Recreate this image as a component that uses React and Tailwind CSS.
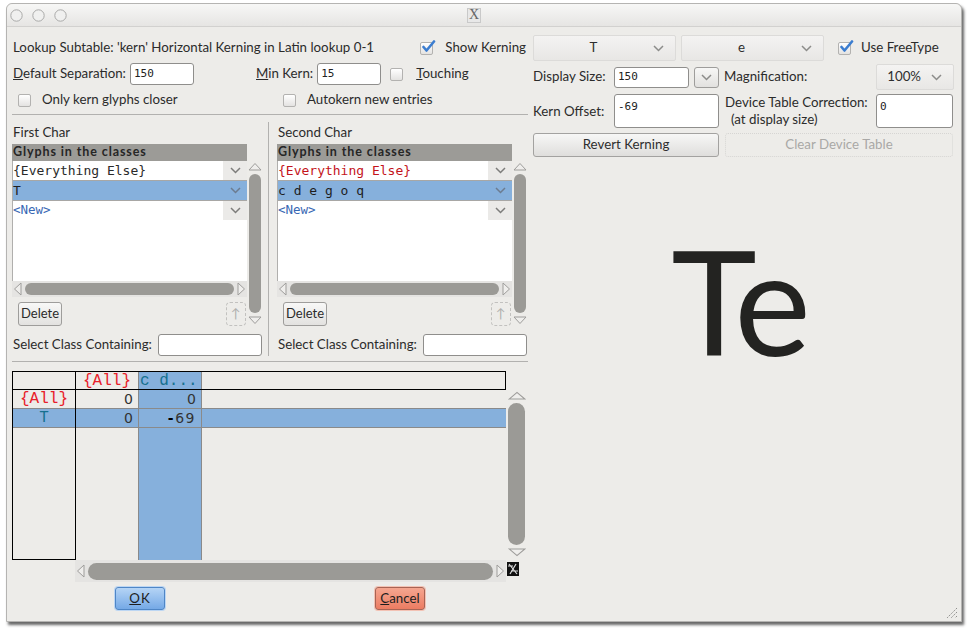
import React from "react";

const UI = "font-['Lato','Open_Sans',sans-serif]";
const MONO = "font-['DejaVu_Sans_Mono',monospace]";
const CMONO = "font-['Liberation_Mono',monospace]";

function Chevron({ color = "#8c8c8a" }) {
  return (
    <svg width="11" height="7" viewBox="0 0 11 7">
      <path d="M1 1 L5.5 5.5 L10 1" fill="none" stroke={color} strokeWidth="1.5" />
    </svg>
  );
}

function Check({ checked }) {
  return (
    <span className="relative inline-block w-[13px] h-[13px] rounded-[2px] border border-[#b3b2b0] bg-gradient-to-b from-white to-[#e4e3e1] shrink-0">
      {checked && (
        <svg className="absolute -top-[3px] left-[0px]" width="15" height="14" viewBox="0 0 15 14">
          <path d="M2.5 7 L5.5 10.5 L13 1.5" fill="none" stroke="#3b7dd0" strokeWidth="2.6" strokeLinecap="round" strokeLinejoin="round" />
        </svg>
      )}
    </span>
  );
}

function Input({ w, h = 22, value = "", top = false }) {
  return (
    <div
      className={`bg-white border border-[#8f8e8c] rounded-[3px] px-[3px] text-[11px] text-[#222] ${MONO} flex ${top ? "items-start pt-[4px]" : "items-center"} shrink-0`}
      style={{ width: w, height: h }}
    >
      {value}
    </div>
  );
}

function Dropdown({ w, label, align = "center" }) {
  return (
    <div
      className="h-full flex items-center rounded-[2px] border border-[#dcdbd9] bg-gradient-to-b from-[#f4f3f2] to-[#e8e7e5] shrink-0"
      style={{ width: w }}
    >
      <div className={`flex-1 text-[13.3px] text-[#2e2e2e] ${align === "center" ? "text-center" : "text-right pr-[10px]"}`}>{label}</div>
      <div className="pr-[11px]">
        <Chevron />
      </div>
    </div>
  );
}

function Button({ w, children, className = "" }) {
  return (
    <div
      className={`h-full flex items-center justify-center rounded-[3px] border border-[#a3a2a0] bg-gradient-to-b from-[#f7f7f6] to-[#dfdedc] text-[13.3px] text-[#2e2e2e] shrink-0 ${className}`}
      style={{ width: w }}
    >
      {children}
    </div>
  );
}

function TriUp({ w = 14 }) {
  return (
    <svg width={w} height="9" viewBox="0 0 14 9" preserveAspectRatio="none">
      <path d="M1 8 L7 1.5 L13 8 Z" fill="#efeeec" stroke="#9e9d9b" strokeWidth="1" />
    </svg>
  );
}
function TriDown({ w = 14 }) {
  return (
    <svg width={w} height="9" viewBox="0 0 14 9" preserveAspectRatio="none">
      <path d="M1 1 L7 7.5 L13 1 Z" fill="#efeeec" stroke="#9e9d9b" strokeWidth="1" />
    </svg>
  );
}
function TriLeft() {
  return (
    <svg width="9" height="14" viewBox="0 0 9 14">
      <path d="M8 1 L1.5 7 L8 13 Z" fill="#efeeec" stroke="#9e9d9b" strokeWidth="1" />
    </svg>
  );
}
function TriRight() {
  return (
    <svg width="9" height="14" viewBox="0 0 9 14">
      <path d="M1 1 L7.5 7 L1 13 Z" fill="#efeeec" stroke="#9e9d9b" strokeWidth="1" />
    </svg>
  );
}

function VScroll({ thumb = 12, triW = 14 }) {
  return (
    <div className="h-full flex flex-col items-center py-[1px]">
      <TriUp w={triW} />
      <div className="flex-1 my-[3px] rounded-full bg-[#9b9a96]" style={{ width: thumb }} />
      <TriDown w={triW} />
    </div>
  );
}

function HScroll({ thumb = 12 }) {
  return (
    <div className="h-full flex items-center px-[1px] bg-[#e5e4e2]">
      <TriLeft />
      <div className="flex-1 mx-[3px] rounded-full bg-[#9b9a96]" style={{ height: thumb }} />
      <TriRight />
    </div>
  );
}

function ClassPanel({ title, redElse, selected }) {
  return (
    <div className="w-[250px] flex flex-col shrink-0">
      <div className="h-[20px] flex items-center pl-[1px] pt-[1px] text-[13.3px]">{title}</div>
      <div className="mt-[2px] flex">
        <div className="w-[235px] flex flex-col">
          <div className="h-[17px] bg-[#9c9b97] font-bold text-[#262626] text-[12.5px] tracking-[0.9px] flex items-center pl-[1px]">
            Glyphs in the classes
          </div>
          <div className={`h-[120px] bg-white border-l border-[#b0afad] flex flex-col ${MONO} text-[13px]`}>
            <div className="h-[20px] flex items-stretch border-b border-[#a8a7a5]">
              <div className={`flex-1 flex items-center ${redElse ? "text-[#c4141b]" : "text-[#2a2a2a]"}`}>{"{Everything Else}"}</div>
              <div className="w-[24px] bg-[#ebeae8] flex items-center justify-center">
                <Chevron color="#7d7d7b" />
              </div>
            </div>
            <div className="h-[20px] flex items-stretch bg-[#86b0dc] border-b border-[#a8a7a5]">
              <div className="flex-1 flex items-center text-[#1e1e1e] whitespace-pre">{selected}</div>
              <div className="w-[24px] flex items-center justify-center">
                <Chevron color="#6c7c90" />
              </div>
            </div>
            <div className="h-[19px] flex items-stretch">
              <div className="flex-1 flex items-center text-[#3868b4] text-[12.5px]">{"<New>"}</div>
              <div className="w-[24px] bg-[#ebeae8] flex items-center justify-center">
                <Chevron color="#7d7d7b" />
              </div>
            </div>
          </div>
          <div className="h-[16px]">
            <HScroll thumb={12} />
          </div>
          <div className="mt-[5px] h-[24px] flex justify-between">
            <div className="ml-[6px] w-[44px] h-[24px] rounded-[3px] border border-[#9e9d9b] bg-gradient-to-b from-[#f8f8f7] to-[#e3e2e0] flex items-center justify-center text-[13px]">
              Delete
            </div>
            <div className="mr-[1px] w-[20px] h-[24px] rounded-[4px] border border-dashed border-[#c2c1bf] flex items-center justify-center text-[#b0afad] text-[13px]">
              ↑
            </div>
          </div>
        </div>
        <div className="w-[15px] mt-[17px] h-[165px]">
          <VScroll thumb={12} />
        </div>
      </div>
      <div className="mt-[8px] h-[22px] flex items-center justify-between pl-[1px] text-[13.3px]">
        <span>Select Class Containing:</span>
        <Input w={104} h={22} />
      </div>
    </div>
  );
}

const blue = "bg-[#86b0dc]";

function KernTable() {
  return (
    <div className="mt-[9px] flex flex-col">
      <div className="flex">
        <div className="w-[494px] flex flex-col">
          <div className={`h-[19px] flex border border-black ${CMONO} text-[16px]`}>
            <div className="w-[63px] border-r border-black" />
            <div className="w-[63px] flex items-center justify-center text-[#e8202a] border-r border-[#888]">{"{All}"}</div>
            <div className={`w-[63px] ${blue} flex items-center pl-[1px] text-[#17708f] border-r border-[#888]`}>c d...</div>
            <div className="flex-1" />
          </div>
          <div className="h-[170px] flex text-[16px]">
            <div className={`w-[64px] border-l border-r border-b border-black flex flex-col ${CMONO}`}>
              <div className="h-[18px] flex items-center justify-center text-[#e8202a]">{"{All}"}</div>
              <div className={`h-[20px] ${blue} border-y border-[#8a8a8a] flex items-center justify-center text-[#17708f]`}>T</div>
            </div>
            <div className={`w-[63px] border-r border-[#8a8a8a] flex flex-col font-['DejaVu_Sans',sans-serif] text-[14px] text-[#333]`}>
              <div className="h-[18px] flex items-center justify-end pr-[5px]">0</div>
              <div className={`h-[20px] ${blue} border-y border-[#8a8a8a] flex items-center justify-end pr-[5px]`}>0</div>
            </div>
            <div className={`w-[63px] ${blue} border-r border-[#8a8a8a] flex flex-col font-['DejaVu_Sans',sans-serif] text-[14px] text-[#333]`}>
              <div className="h-[18px] flex items-center justify-end pr-[5px]">0</div>
              <div className="h-[20px] border-y border-[#8a8a8a] flex items-center justify-end pr-[5px] tracking-[1.5px]">
                <span className="font-bold text-black">-</span>69
              </div>
            </div>
            <div className="flex-1 flex flex-col">
              <div className="h-[18px]" />
              <div className={`h-[20px] ${blue} border-y border-[#8a8a8a]`} />
            </div>
          </div>
        </div>
        <div className="w-[19px] mt-[19px] h-[168px] ml-[1px]">
          <VScroll thumb={17} triW={18} />
        </div>
      </div>
      <div className="flex h-[22px]">
        <div className="ml-[63px] w-[431px] h-[22px]">
          <HScroll thumb={17} />
        </div>
        <div className="ml-[1px] mt-[2px]">
          <svg width="12" height="14" viewBox="0 0 12 14">
            <rect x="0" y="0" width="12" height="14" fill="#111" />
            <path d="M2 2 L10 12 M9 2 L3 12 M1 4 L6 4 M4 9 L11 9" stroke="#ddd" strokeWidth="1.2" />
          </svg>
        </div>
      </div>
    </div>
  );
}

export default function App() {
  return (
    <div className={`w-[968px] h-[632px] bg-white overflow-hidden ${UI} text-[#2b2b2b]`}>
      <div className="ml-[6px] mt-[3px] w-[956px] h-[619px] border border-[#b5b4b2] rounded-t-[6px] shadow-[2px_3px_3px_rgba(0,0,0,0.6)] bg-[#edece9] flex flex-col relative">
        {/* title bar */}
        <div className="h-[23px] rounded-t-[6px] bg-gradient-to-b from-[#f7f7f6] to-[#e6e5e3] border-b border-[#d2d1cf] flex items-center shrink-0">
          <div className="pl-[3px] flex gap-[9px]">
            {[0, 1, 2].map((i) => (
              <svg key={i} width="13" height="13" viewBox="0 0 13 13">
                <circle cx="6.5" cy="6.5" r="5.7" fill="#f0f0ef" stroke="#a9a9a8" strokeWidth="1" />
              </svg>
            ))}
          </div>
          <div className="flex-1 flex justify-center pr-[10px]">
            <div className="w-[14px] h-[15px] bg-[#e8e8e8] border border-[#c9c9c9] flex items-center justify-center font-['Liberation_Serif',serif] text-[14px] text-[#666] leading-none">
              X
            </div>
          </div>
          <div className="w-[70px]" />
        </div>

        {/* body */}
        <div className="flex flex-1 pl-[5px]">
          {/* left column */}
          <div className="w-[516px] flex flex-col pt-[11px] text-[13.3px] shrink-0">
            <div className="h-[20px] flex items-center">
              <span className="pl-[1px]">Lookup Subtable: 'kern' Horizontal Kerning in Latin lookup 0-1</span>
              <div className="flex-1" />
              <Check checked />
              <span className="ml-[12px] mr-[2px]">Show Kerning</span>
            </div>
            <div className="mt-[5px] h-[22px] flex items-center">
              <div className="w-[244px] flex items-center shrink-0">
                <span className="pl-[1px]">
                  <span className="underline">D</span>efault Separation:
                </span>
                <div className="ml-[4px]">
                  <Input w={64} value="150" />
                </div>
              </div>
              <span>
                <span className="underline">M</span>in Kern:
              </span>
              <div className="ml-[4px]">
                <Input w={64} value="15" />
              </div>
              <div className="ml-[9px] flex items-center">
                <Check />
              </div>
              <span className="ml-[13px]">
                <span className="underline">T</span>ouching
              </span>
            </div>
            <div className="mt-[5px] h-[20px] flex items-center">
              <div className="w-[271px] flex items-center shrink-0 pl-[6px]">
                <Check />
                <span className="ml-[11px]">Only kern glyphs closer</span>
              </div>
              <Check />
              <span className="ml-[11px]">Autokern new entries</span>
            </div>
            <div className="mt-[4px] h-[1px] bg-[#b2b1af]" />
            <div className="mt-[7px] h-[234px] flex">
              <ClassPanel title="First Char" selected="T" />
              <div className="ml-[6px] w-[1px] h-full bg-[#b2b1af]" />
              <div className="ml-[8px]">
                <ClassPanel title="Second Char" redElse selected="c d e g o q" />
              </div>
            </div>
            <div className="mt-[5px] h-[1px] bg-[#b2b1af]" />
            <KernTable />
            <div className="mt-[5px] h-[23px] flex">
              <div className="ml-[103px] w-[50px] h-[23px] rounded-[3px] border border-[#4f86c6] shadow-[0_0_0_1px_#bcd6f3] bg-gradient-to-b from-[#b5d4f5] to-[#75a9e6] flex items-center justify-center text-[13.3px] text-[#1e1e1e] tracking-[1px]">
                <span className="underline">O</span>K
              </div>
              <div className="ml-[210px] w-[50px] h-[23px] rounded-[3px] border border-[#a86454] shadow-[0_0_0_1px_#f3c2b4] bg-gradient-to-b from-[#f5a690] to-[#eb7c62] flex items-center justify-center text-[13.3px] text-[#1e1e1e]">
                <span className="underline">C</span>ancel
              </div>
            </div>
          </div>

          {/* right column */}
          <div className="ml-[5px] w-[421px] flex flex-col pt-[8px] text-[13.3px] shrink-0">
            <div className="h-[26px] flex items-center">
              <Dropdown w={143} label="T" />
              <div className="ml-[5px] h-full">
                <Dropdown w={143} label="e" />
              </div>
              <div className="ml-[14px] flex items-center">
                <Check checked />
              </div>
              <span className="ml-[10px]">Use FreeType</span>
            </div>
            <div className="mt-[3px] h-[26px] flex items-center">
              <span className="w-[81px] shrink-0">Display Size:</span>
              <Input w={75} h={21} value="150" />
              <div className="ml-[5px] w-[25px] h-[21px] rounded-[3px] border border-[#9e9d9b] bg-gradient-to-b from-[#f7f7f6] to-[#e2e1df] flex items-center justify-center">
                <Chevron />
              </div>
              <span className="ml-[5px]">Magnification:</span>
              <div className="flex-1" />
              <Dropdown w={78} label="100%" align="right" />
            </div>
            <div className="mt-[4px] h-[34px] flex items-center">
              <span className="w-[81px] shrink-0 pt-[2px]">Kern Offset:</span>
              <Input w={105} h={34} value="-69" top />
              <div className="ml-[6px] flex flex-col leading-[17px]">
                <span>Device Table Correction:</span>
                <span className="pl-[6px]">(at display size)</span>
              </div>
              <div className="flex-1" />
              <div className="mr-[1px]">
                <Input w={77} h={34} value="0" top />
              </div>
            </div>
            <div className="mt-[5px] h-[24px] flex">
              <Button w={186}>Revert Kerning</Button>
              <div className="ml-[6px] w-[228px] h-[24px] flex items-center justify-center text-[#a9a8a6] border border-dotted border-[#d6d5d3] rounded-[3px]">
                Clear Device Table
              </div>
            </div>
            <div className="mt-[71px] flex justify-center pr-[10px] font-['Lato',sans-serif] text-[145px] leading-[145px] text-[#232321] tracking-[-5px]">
              Te
            </div>
          </div>
        </div>

        {/* resize grip */}
        <svg className="absolute right-[3px] bottom-[2px]" width="13" height="13" viewBox="0 0 13 13">
          <path d="M12 2 L2 12 M12 6 L6 12 M12 10 L10 12" stroke="#8f8f8d" strokeWidth="1" strokeDasharray="1.5 1" />
        </svg>
      </div>
    </div>
  );
}
